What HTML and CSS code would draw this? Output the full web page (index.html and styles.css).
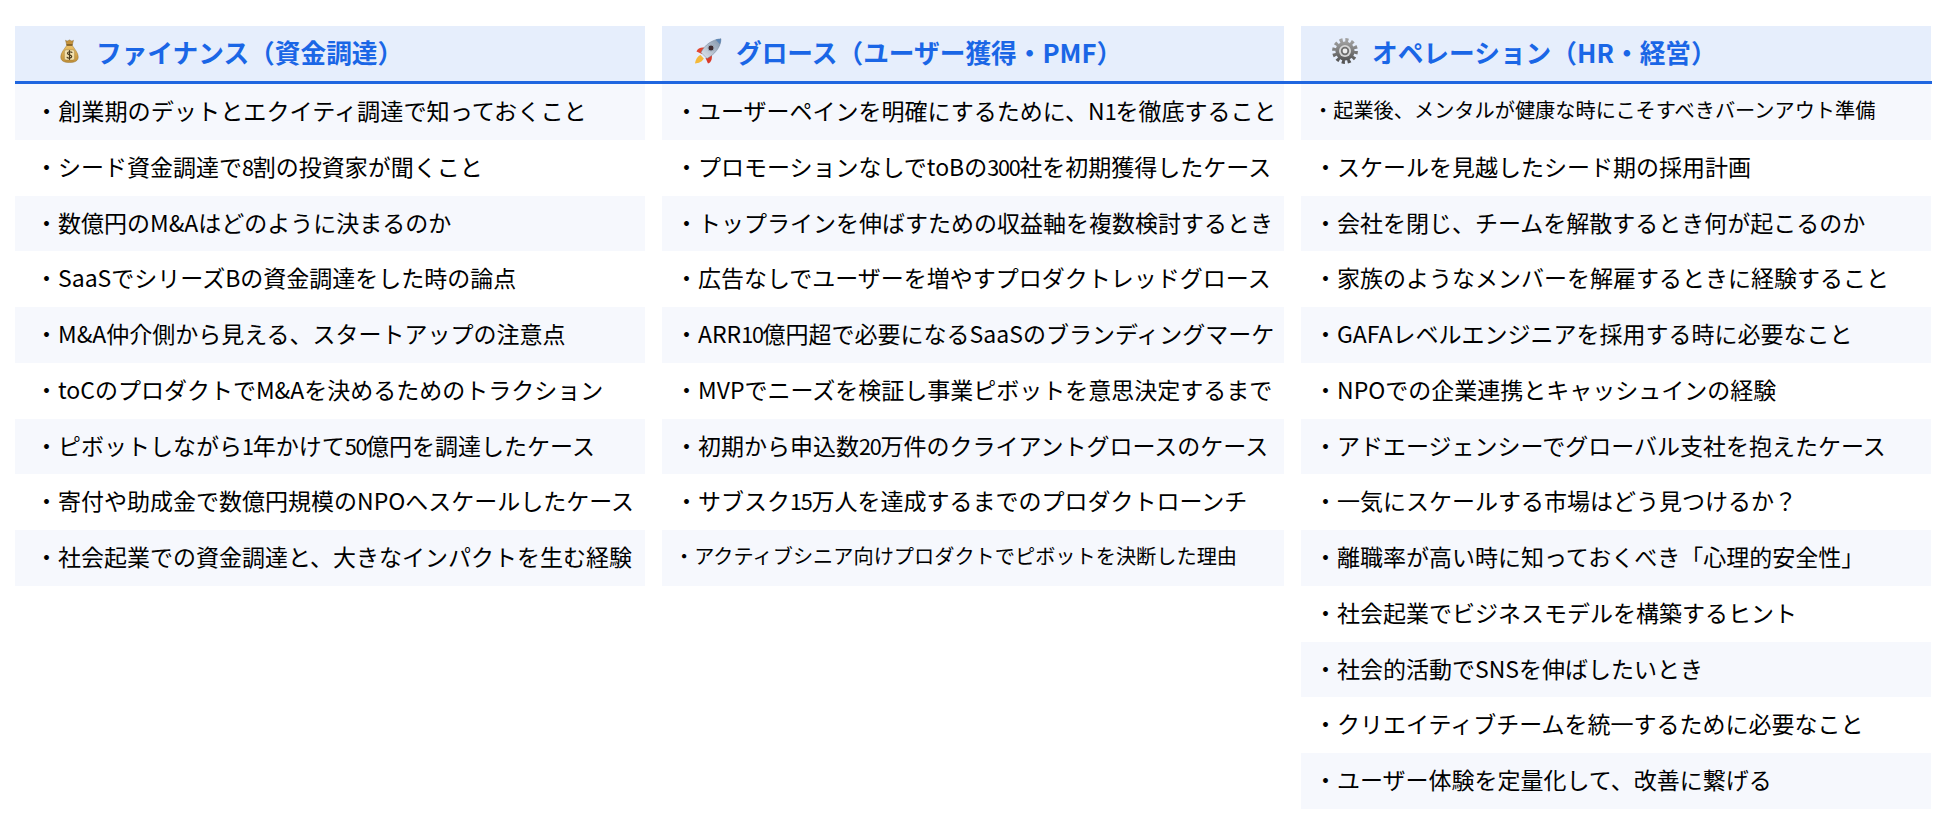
FILE: index.html
```html
<!DOCTYPE html>
<html lang="ja">
<head>
<meta charset="utf-8">
<title>テーマ一覧</title>
<link rel="stylesheet" href="styles.css">
</head>
<body>
<main class="board">
  <div class="heads">
    <h2 class="head head-a">
      <svg class="icon icon-bag" viewBox="0 0 24 30" aria-hidden="true">
        <defs>
          <linearGradient id="bagFill" x1="0" y1="0" x2="0" y2="1"><stop offset="0" stop-color="#eec267"/><stop offset="1" stop-color="#c08f38"/></linearGradient>
        </defs>
        <path d="M7 1.5 C9 3 10 2 12 1 C14 2 15 3 17 1.5 L15.5 7.5 L8.5 7.5 Z" fill="#c4923c" stroke="#8a6526" stroke-width=".6"/>
        <path d="M8.5 8 C6 12 1 17 1 22.5 C1 27.5 5 29.5 12 29.5 C19 29.5 23 27.5 23 22.5 C23 17 18 12 15.5 8 Z" fill="url(#bagFill)" stroke="#93702c" stroke-width=".6"/>
        <rect x="8" y="6.6" width="8" height="1.8" rx=".9" fill="#7c5a20"/>
        <rect x="5.5" y="13.5" width="13" height="13" rx="2.5" fill="#f1dfae" stroke="#9a7a35" stroke-width=".6"/>
        <path d="M15 16.8 C14 15.5 9.4 15.5 9.4 17.9 C9.4 20.5 14.8 19.4 14.8 22 C14.8 24.4 10 24.3 9 23 M12 14.5 V25.5" fill="none" stroke="#4a3a1c" stroke-width="1.5" stroke-linecap="round"/>
      </svg>
      <span>ファイナンス（資金調達）</span>
    </h2>
    <h2 class="head head-b">
      <svg class="icon icon-rocket" viewBox="0 0 28 26" aria-hidden="true">
        <defs>
          <linearGradient id="hull" x1="0" y1="1" x2="1" y2="0"><stop offset="0" stop-color="#e3e8ee"/><stop offset="1" stop-color="#7f92a9"/></linearGradient>
        </defs>
        <path d="M6.5 17 C3.5 18 1.5 22 1 25.5 C4.5 25.3 8.5 23.6 9.8 20.5 Z" fill="#f4b93a"/>
        <path d="M8 16 L2.5 13.5 C3.5 10.5 6.5 9 10.5 9.5 Z" fill="#e2452f"/>
        <path d="M11.5 20 L14 25.5 C17 24.5 18.3 21.5 17.8 17 Z" fill="#d93a2a"/>
        <path d="M7 14.5 C10.5 7 18 1.5 27 .8 C26.8 9.5 20.5 16.5 13 20.5 Z" fill="url(#hull)" stroke="#6f8096" stroke-width=".5"/>
        <path d="M21.5 1.5 C23.3 1.2 25.5 1 27 .8 C27 2.6 26.6 4.6 26 6.2 Z" fill="#5d86b5"/>
        <circle cx="17" cy="10" r="3" fill="#3f2a2e" stroke="#9aa7b7" stroke-width="1"/>
      </svg>
      <span>グロース（ユーザー獲得・PMF）</span>
    </h2>
    <h2 class="head head-c">
      <svg class="icon icon-gear" viewBox="0 0 26 26" aria-hidden="true">
        <defs>
          <linearGradient id="steel" x1="0" y1="0" x2="0" y2="1"><stop offset="0" stop-color="#a0a0a0"/><stop offset="1" stop-color="#555555"/></linearGradient>
        </defs>
        <circle cx="13" cy="13" r="10.6" fill="none" stroke="url(#steel)" stroke-width="4.6" stroke-dasharray="3 2.55"/>
        <circle cx="13" cy="13" r="9.6" fill="url(#steel)"/>
        <circle cx="13" cy="13" r="6" fill="#d7d7d7"/>
        <circle cx="13" cy="13" r="4.2" fill="#6f6f6f"/>
        <circle cx="13" cy="13" r="2.4" fill="#eeeeee"/>
      </svg>
      <span>オペレーション（HR・経営）</span>
    </h2>
  </div>
  <div class="cols">
    <ul class="list list-a">
      <li class="row row-wide">・創業期のデットとエクイティ調達で知っておくこと</li>
      <li class="row">・シード資金調達で<span class="num">8</span>割の投資家が聞くこと</li>
      <li class="row">・数億円のM&amp;Aはどのように決まるのか</li>
      <li class="row">・SaaSでシリーズBの資金調達をした時の論点</li>
      <li class="row">・M&amp;A仲介側から見える、スタートアップの注意点</li>
      <li class="row">・toCのプロダクトでM&amp;Aを決めるためのトラクション</li>
      <li class="row">・ピボットしながら<span class="num">1</span>年かけて<span class="num">50</span>億円を調達したケース</li>
      <li class="row">・寄付や助成金で数億円規模のNPOへスケールしたケース</li>
      <li class="row">・社会起業での資金調達と、大きなインパクトを生む経験</li>
    </ul>
    <ul class="list">
      <li class="row">・ユーザーペインを明確にするために、N<span class="num">1</span>を徹底すること</li>
      <li class="row">・プロモーションなしでtoBの<span class="num">300</span>社を初期獲得したケース</li>
      <li class="row">・トップラインを伸ばすための収益軸を複数検討するとき</li>
      <li class="row">・広告なしでユーザーを増やすプロダクトレッドグロース</li>
      <li class="row">・ARR<span class="num">10</span>億円超で必要になるSaaSのブランディングマーケ</li>
      <li class="row">・MVPでニーズを検証し事業ピボットを意思決定するまで</li>
      <li class="row">・初期から申込数<span class="num">20</span>万件のクライアントグロースのケース</li>
      <li class="row">・サブスク<span class="num">15</span>万人を達成するまでのプロダクトローンチ</li>
      <li class="row row-small">・アクティブシニア向けプロダクトでピボットを決断した理由</li>
    </ul>
    <ul class="list">
      <li class="row row-small">・起業後、メンタルが健康な時にこそすべきバーンアウト準備</li>
      <li class="row">・スケールを見越したシード期の採用計画</li>
      <li class="row">・会社を閉じ、チームを解散するとき何が起こるのか</li>
      <li class="row">・家族のようなメンバーを解雇するときに経験すること</li>
      <li class="row">・GAFAレベルエンジニアを採用する時に必要なこと</li>
      <li class="row">・NPOでの企業連携とキャッシュインの経験</li>
      <li class="row">・アドエージェンシーでグローバル支社を抱えたケース</li>
      <li class="row">・一気にスケールする市場はどう見つけるか？</li>
      <li class="row">・離職率が高い時に知っておくべき「心理的安全性」</li>
      <li class="row">・社会起業でビジネスモデルを構築するヒント</li>
      <li class="row">・社会的活動でSNSを伸ばしたいとき</li>
      <li class="row">・クリエイティブチームを統一するために必要なこと</li>
      <li class="row">・ユーザー体験を定量化して、改善に繋げる</li>
    </ul>
  </div>
</main>
</body>
</html>
```
FILE: styles.css
```css
* { box-sizing: border-box; }
html, body { margin: 0; background: #fff; }
body {
  height: 822px;
  overflow: hidden;
  font-family: "Noto Sans CJK JP", "Noto Sans", sans-serif;
  color: #000;
}
.board { padding: 26px 12px 0 15px; }
.heads, .cols {
  display: grid;
  grid-template-columns: 630px 622px 630px;
  column-gap: 17px;
}
.heads { border-bottom: 3px solid #1f66e0; }
.head {
  display: flex;
  align-items: center;
  height: 55px;
  margin: 0;
  padding-bottom: 5px;
  background: #e6eefc;
  color: #1a66e6;
  font-size: 25.7px;
  font-weight: 700;
  white-space: nowrap;
}
.head-a { padding-left: 45px; gap: 17px; }
.head-b { padding-left: 32px; gap: 14px; }
.head-c { padding-left: 31px; gap: 14px; }
.icon { flex: none; }
.icon-bag { width: 19px; height: 24px; }
.icon-rocket { width: 28px; height: 26px; }
.icon-gear { width: 26px; height: 26px; }
.list { margin: 0; padding: 0; list-style: none; }
.row {
  display: block;
  height: 55.75px;
  padding-left: 13px;
  font-size: 23px;
  line-height: 52.75px;
  font-weight: 400;
  white-space: nowrap;
  overflow: hidden;
}
.list-a .row { padding-left: 20px; }
.row:nth-child(odd) { background: #f6f8fd; }
.row-small { font-size: 20.2px; padding-left: 12px; }
.row-wide { font-size: 23.15px; }
.num { font-size: .94em; letter-spacing: -.06em; }
```
